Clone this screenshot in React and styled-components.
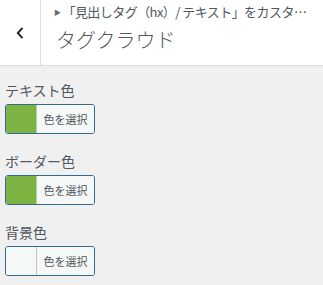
import React from "react";
import styled, { createGlobalStyle } from "styled-components";

const Global = createGlobalStyle`
  html, body { margin: 0; padding: 0; background: #f0f0f1; }
  body { font-family: "Noto Sans CJK JP", "Noto Sans", sans-serif; }
`;

const Page = styled.div`
  width: 323px;
  height: 285px;
  background: #f0f0f1;
  overflow: hidden;
`;

const Header = styled.div`
  display: flex;
  height: 65px;
  background: #fff;
  border-bottom: 1px solid #dcdcde;
`;

const BackButton = styled.div`
  width: 40px;
  flex: none;
  border-right: 1px solid #dcdcde;
  display: flex;
  align-items: center;
  justify-content: center;
  color: #1d2327;
`;

const TitleBlock = styled.div`
  flex: 1;
  min-width: 0;
  padding: 2px 6px 0 12px;
`;

const Crumb = styled.div`
  font-size: 13px;
  line-height: 20px;
  letter-spacing: -0.55px;
  color: #50575e;
  white-space: nowrap;
  overflow: hidden;
  text-overflow: ellipsis;
`;

const Arrow = styled.span`
  display: inline-block;
  font-size: 7px;
  vertical-align: 2px;
  margin: 0 2px 0 1px;
  color: #646970;
`;

const Title = styled.div`
  margin-top: 4px;
  padding-left: 3px;
  font-size: 20px;
  line-height: 28px;
  font-weight: 300;
  color: #50575e;
`;

const Content = styled.div`
  padding: 12px 5px 0;
`;

const Control = styled.div`
  margin-bottom: 15px;
`;

const Label = styled.div`
  font-size: 14px;
  line-height: 24px;
  color: #50575e;
  margin-bottom: 2px;
`;

const ColorButton = styled.div`
  display: flex;
  width: 90px;
  height: 30px;
  box-sizing: border-box;
  border: 1px solid #2f6b92;
  border-radius: 3px;
  overflow: hidden;
  background: #f6f7f7;
`;

const Swatch = styled.div`
  width: 30px;
  flex: none;
  background: ${(p) => p.$color || "#f6f7f7"};
`;

const ButtonText = styled.div`
  flex: 1;
  border-left: 1px solid #c3c4c7;
  background: #f6f7f7;
  font-size: 11px;
  line-height: 28px;
  color: #50575e;
  text-align: center;
`;

const controls = [
  { label: "テキスト色", color: "#7cb342" },
  { label: "ボーダー色", color: "#7cb342" },
  { label: "背景色", color: null },
];

export default function App() {
  return (
    <Page>
      <Global />
      <Header>
        <BackButton>
          <svg width="10" height="14" viewBox="0 0 10 14">
            <path d="M7.5 1.8 L2.8 7 L7.5 12.2" fill="none" stroke="currentColor" strokeWidth="1.9" />
          </svg>
        </BackButton>
        <TitleBlock>
          <Crumb>
            <Arrow>▶</Arrow>「見出しタグ（hx）/ テキスト」をカスタマイズ中
          </Crumb>
          <Title>タグクラウド</Title>
        </TitleBlock>
      </Header>
      <Content>
        {controls.map((c) => (
          <Control key={c.label}>
            <Label>{c.label}</Label>
            <ColorButton>
              <Swatch $color={c.color} />
              <ButtonText>色を選択</ButtonText>
            </ColorButton>
          </Control>
        ))}
      </Content>
    </Page>
  );
}
